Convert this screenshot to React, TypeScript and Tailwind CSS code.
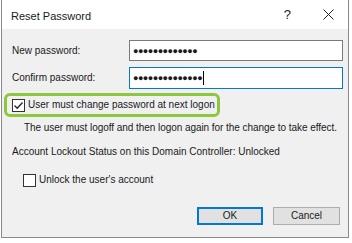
import React from 'react';

const font = { fontFamily: '"Liberation Sans", Arial, sans-serif' };

function Check({ checked }: { checked?: boolean }) {
  return (
    <span className="w-[13px] h-[13px] border border-[#333] bg-white flex items-center justify-center shrink-0">
      {checked && (
        <svg width="11" height="11" viewBox="0 0 11 11">
          <path d="M1.5 5.5 L4.2 8.2 L9.5 2.5" fill="none" stroke="#222" strokeWidth="1.3" />
        </svg>
      )}
    </span>
  );
}

export default function App() {
  return (
    <div className="w-[352px] h-[243px] bg-white overflow-hidden text-[10px] leading-[14px] text-[#1a1a1a] whitespace-nowrap" style={font}>
      <div className="ml-[1px] w-[348px] h-[238px] border border-[#8a8a8a] border-t-0 bg-[#f0f0f0] flex flex-col">
        {/* Title bar */}
        <div className="h-[29px] shrink-0 bg-white flex items-center pl-[9px] pr-[14px]">
          <span className="flex-1 pt-[2px] text-[11px]">Reset Password</span>
          <span className="text-[13px] mr-[32px]">?</span>
          <svg width="11" height="11" viewBox="0 0 11 11">
            <path d="M0.5 0.5 L10.5 10.5 M10.5 0.5 L0.5 10.5" stroke="#222" strokeWidth="1" />
          </svg>
        </div>

        {/* Body */}
        <div className="flex flex-col pl-[10px] pr-[5px] pt-[11px]">
          <div className="flex items-center h-[21px]">
            <span className="w-[117px]">New password:</span>
            <div className="flex-1 h-[21px] border border-[#7a7a7a] bg-white flex items-center pl-[3px] text-[9px] tracking-[-0.5px]">
              ●●●●●●●●●●●●●
            </div>
          </div>
          <div className="flex items-center h-[22px] mt-[6px]">
            <span className="w-[117px]">Confirm password:</span>
            <div className="flex-1 h-[22px] border border-[#0078d7] bg-white flex items-center pl-[3px] text-[9px] tracking-[-0.5px]">
              ●●●●●●●●●●●●●●
              <span className="w-[1px] h-[14px] bg-black ml-[1px]" />
            </div>
          </div>

          {/* Highlighted checkbox */}
          <div className="self-start -ml-[8px] mt-[4px] h-[24px] w-[216px] border-[3px] border-[#8dc63f] rounded-[6px] flex items-center pl-[5px] gap-[3px]">
            <Check checked />
            <span>User must change password at next logon</span>
          </div>

          <div className="pl-[12px] mt-[3px] leading-[16px] tracking-[-0.05px]">
            The user must logoff and then logon again for the change to take effect.
          </div>
          <div className="mt-[8px] leading-[16px]">
            Account Lockout Status on this Domain Controller: Unlocked
          </div>

          <div className="flex items-center gap-[3px] pl-[11px] mt-[13px]">
            <Check />
            <span>Unlock the user's account</span>
          </div>

          <div className="flex justify-end gap-[10px] mt-[20px] pr-[3px]">
            <button className="w-[66px] h-[18px] border-2 border-[#0078d7] bg-[#e1e1e1] flex items-center justify-center">
              OK
            </button>
            <button className="w-[67px] h-[18px] border border-[#adadad] bg-[#e1e1e1] flex items-center justify-center">
              Cancel
            </button>
          </div>
        </div>
      </div>
    </div>
  );
}
